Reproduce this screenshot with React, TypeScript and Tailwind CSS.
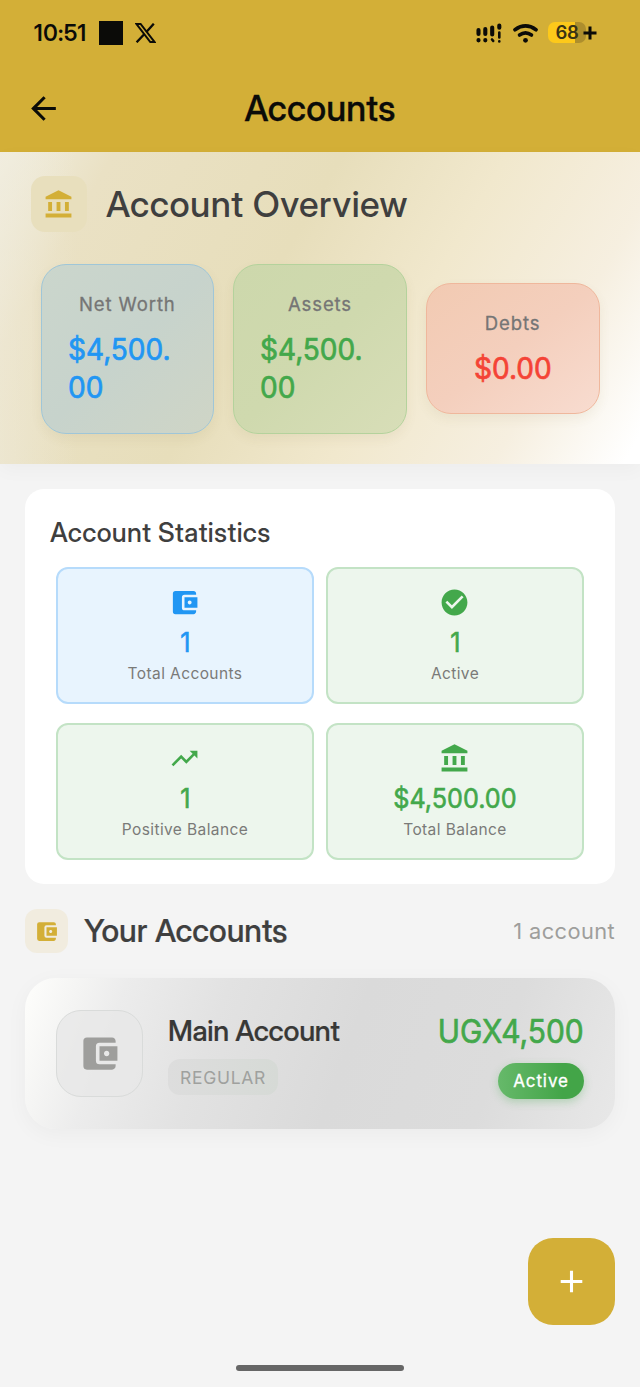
import type { ReactNode } from 'react'
import type { IconType } from 'react-icons'
import {
  MdAccountBalance,
  MdAccountBalanceWallet,
  MdAdd,
  MdArrowBack,
  MdCheckCircle,
  MdTrendingUp,
} from 'react-icons/md'
import clsx from 'clsx'

const summary = [
  {
    label: 'Net Worth',
    value: ['$4,500.', '00'],
    box: 'h-[170px] border-[#9fc6d8] bg-linear-to-br from-[#cbd6cc] via-[#c7d3cc] to-[#cfd5c6]',
    text: 'text-[#2196f3]',
  },
  {
    label: 'Assets',
    value: ['$4,500.', '00'],
    box: 'h-[170px] border-[#b4d29c] bg-linear-to-br from-[#cdd8ac] via-[#cfd9ae] to-[#d8deb8]',
    text: 'text-[#43a84b]',
  },
  {
    label: 'Debts',
    value: ['$0.00'],
    box: 'h-[131px] border-[#efb79c] bg-linear-to-br from-[#f2cab2] via-[#f4cfbd] to-[#f8dcd0]',
    text: 'text-[#f44336]',
  },
]

const stats: { label: string; value: string; icon: IconType; blue?: boolean }[] = [
  { label: 'Total Accounts', value: '1', icon: MdAccountBalanceWallet, blue: true },
  { label: 'Active', value: '1', icon: MdCheckCircle },
  { label: 'Positive Balance', value: '1', icon: MdTrendingUp },
  { label: 'Total Balance', value: '$4,500.00', icon: MdAccountBalance },
]

export default function App() {
  return (
    <div className="flex h-[1387px] w-[640px] flex-col overflow-hidden bg-[#f4f4f4] font-['Inter',sans-serif] text-[#3f3f3f]">
      <header className="h-[152px] shrink-0 bg-[#d3af37] text-[#0b0b08]">
        <StatusBar />
        <div className="grid h-[88px] grid-cols-[1fr_auto_1fr] items-center px-[25px]">
          <MdArrowBack size={37} />
          <h1 className="pt-0.5 font-['Inter_Display','Inter',sans-serif] text-[35.5px] font-medium tracking-[0.2px] [-webkit-text-stroke:0.3px]">
            Accounts
          </h1>
        </div>
      </header>
      <Overview />
      <main className="flex flex-col px-[25px] pt-[25px]">
        <Statistics />
        <div className="mt-[25px] flex h-11 items-center">
          <div className="flex h-11 w-[43px] items-center justify-center rounded-xl bg-[#f1ecdf]">
            <MdAccountBalanceWallet size={25} className="text-[#d3af37]" />
          </div>
          <h2 className="ml-4 font-['Inter_Display','Inter',sans-serif] text-[31.5px] font-medium [-webkit-text-stroke:0.2px]">
            Your Accounts
          </h2>
          <span className="ml-auto text-[21.8px] tracking-[0.4px] text-[#9e9e9c]">1 account</span>
        </div>
        <AccountCard />
      </main>
      <button className="mt-[109px] mr-[25px] flex size-[87px] shrink-0 items-center justify-center self-end rounded-[25px] bg-[#d3af37] text-white">
        <MdAdd size={37} />
      </button>
      <div className="mt-10 h-1.5 w-[168px] shrink-0 self-center rounded-full bg-[#666]" />
    </div>
  )
}

function StatusBar() {
  return (
    <div className="flex h-[65px] -mb-px items-center pr-[43px] pl-[34px]">
      <span className="w-[65px] font-['Inter_Display','Inter',sans-serif] text-[22.5px] font-semibold tracking-[0.6px]">
        10:51
      </span>
      <div className="size-6 bg-[#0b0b08]" />
      <svg className="ml-3 h-5 w-[21px]" viewBox="0 0 21 20" fill="none" stroke="currentColor">
        <path d="M1.5 1H5.6L19.5 19H15.3Z" strokeWidth="2" />
        <path d="M18.8 .7L11.6 8.7M9.2 11.3L1.6 19.3" strokeWidth="2.3" />
      </svg>
      <svg className="ml-auto h-5 w-[27px]" viewBox="0 0 27 20" fill="none" stroke="currentColor" strokeLinecap="round">
        <path d="M2.5 7v4M9.3 6v5M16.2 4.5v7M23.3 2.5v2.2" strokeWidth="4.1" />
        <path d="M2.5 17.2v.1M9.3 17.2v.1" strokeWidth="4.2" />
        <path d="M23.3 9.5v5M16 16.5l1.2 1.4M23.3 18.3v.1" strokeWidth="2.6" />
      </svg>
      <svg className="ml-[9px] h-5 w-[27px]" viewBox="0 0 27 20" fill="none" stroke="currentColor" strokeLinecap="round">
        <path d="M3 6.7Q13.5 -.8 24 6.7" strokeWidth="3.7" />
        <path d="M7.5 12Q13.5 7.6 19.5 12" strokeWidth="3.6" />
        <circle cx="13.5" cy="17.3" r="2.4" fill="currentColor" stroke="none" />
      </svg>
      <div className="ml-[9px] flex items-center">
        <div className="flex h-[21px] w-[38px] items-center justify-center rounded-[7px] bg-linear-to-r from-[#fdc91a] from-70% to-[#ad8e2d] to-70% text-[18.5px] font-semibold tracking-[-0.3px] text-[#3a3414]">
          68
        </div>
        <svg className="-ml-[3px] size-[14px]" viewBox="0 0 14 14" stroke="currentColor" strokeWidth="3">
          <path d="M7 .5v13M.5 7h13" />
        </svg>
      </div>
    </div>
  )
}

function Overview() {
  return (
    <section className="flex h-[312px] shrink-0 flex-col bg-[linear-gradient(90deg,rgba(240,236,222,0.5),rgba(240,236,222,0)_12%),linear-gradient(120deg,#f1eee0_0%,#eae1c4_14%,#e7debb_42%,#f1e8cd_62%,#f6efe0_82%,#ffffff_98%)] pt-6 shadow-[0_6px_18px_rgba(0,0,0,0.03)]">
      <div className="flex h-14 items-center pl-[31px]">
        <div className="flex size-14 items-center justify-center rounded-[14px] bg-[#e8dfbd]">
          <MdAccountBalance size={31} className="mr-px text-[#d3af37]" />
        </div>
        <h2 className="ml-[19px] font-['Inter_Display','Inter',sans-serif] text-[36px] leading-[56px] font-medium tracking-[0.5px]">
          Account Overview
        </h2>
      </div>
      <div className="mt-[31.5px] grid h-[170px] grid-cols-3 items-center gap-[19px] px-[40.5px]">
        {summary.map(item => (
          <div
            key={item.label}
            className={clsx(
              'flex flex-col rounded-[25px] border-[1.5px] px-[26px] pt-[26px] shadow-[0_5px_12px_rgba(110,100,40,0.07)]',
              item.box
            )}
          >
            <span className="text-center text-[18.5px] leading-[26px] tracking-[0.9px] text-[#757575] [-webkit-text-stroke:0.3px]">
              {item.label}
            </span>
            <span
              className={clsx(
                'mt-[13px] scale-x-95 text-[29.5px] leading-[38px] [-webkit-text-stroke:0.7px]',
                item.value.length === 1 ? 'text-center' : 'origin-left',
                item.text
              )}
            >
              {item.value.map(line => (
                <span key={line} className="block">{line}</span>
              ))}
            </span>
          </div>
        ))}
      </div>
    </section>
  )
}

function Statistics() {
  return (
    <section className="h-[395px] rounded-[19px] bg-white px-[31px] pt-6">
      <h2 className="-ml-1.5 font-['Inter_Display','Inter',sans-serif] text-[26.5px] leading-[38px] font-medium tracking-[0.35px]">
        Account Statistics
      </h2>
      <div className="mt-4 grid grid-cols-2 gap-x-3 gap-y-[19px]">
        {stats.map(stat => (
          <div
            key={stat.label}
            className={clsx(
              'flex h-[137px] flex-col items-center rounded-xl border-2 pt-[18px]',
              stat.blue ? 'border-[#b6dbfb] bg-[#e8f4fe] text-[#2196f3]' : 'border-[#c3e3c5] bg-[#edf6ed] text-[#43a84b]'
            )}
          >
            <stat.icon size={31} className="mr-px" />
            <span className="mt-2 scale-x-95 text-[26.5px] leading-8 [-webkit-text-stroke:0.6px]">{stat.value}</span>
            <span className="mt-[5px] text-[15.5px] leading-[22px] tracking-[0.4px] text-[#7a7a78]">{stat.label}</span>
          </div>
        ))}
      </div>
    </section>
  )
}

function Chip({ className, children }: { className: string; children: ReactNode }) {
  return <span className={clsx('flex h-9 items-center justify-center', className)}>{children}</span>
}

function AccountCard() {
  return (
    <article className="mt-[25px] flex h-[151px] items-center rounded-[31px] bg-[linear-gradient(110deg,#fdfdfb_1%,#ececec_16%,#e2e2e2_32%,#dadada_54%,#dcdcdc_78%,#e8e8e8_100%)] px-[31px] shadow-[0_5px_22px_rgba(0,0,0,0.04)]">
      <div className="flex size-[87px] items-center justify-center rounded-[25px] border-[1.5px] border-[#d9dbda] bg-[#e7e7e7]/80">
        <MdAccountBalanceWallet size={43} className="text-[#9e9e9c]" />
      </div>
      <div className="ml-[25px] flex flex-col items-start">
        <h3 className="font-['Inter_Display','Inter',sans-serif] text-[28.5px] leading-[38px] font-medium tracking-[-0.3px] text-[#383836] [-webkit-text-stroke:0.2px]">
          Main Account
        </h3>
        <Chip className="mt-[9px] w-[110px] rounded-xl bg-linear-to-r from-[#dddddd] to-[#d6dad6] pt-0.5 text-[17.5px] tracking-[0.7px] text-[#9fa19e]">
          REGULAR
        </Chip>
      </div>
      <div className="ml-auto flex flex-col items-end">
        <span className="origin-right scale-x-[0.92] text-[32.5px] leading-[46px] text-[#43a84b] [-webkit-text-stroke:0.7px]">
          UGX4,500
        </span>
        <Chip className="mt-2 w-[86px] rounded-full bg-linear-to-r from-[#66b96a] to-[#43a548] to-75% pt-0.5 text-[17px] tracking-[0.9px] text-white shadow-[0_3px_8px_rgba(67,168,75,0.3)] [-webkit-text-stroke:0.3px]">
          Active
        </Chip>
      </div>
    </article>
  )
}
